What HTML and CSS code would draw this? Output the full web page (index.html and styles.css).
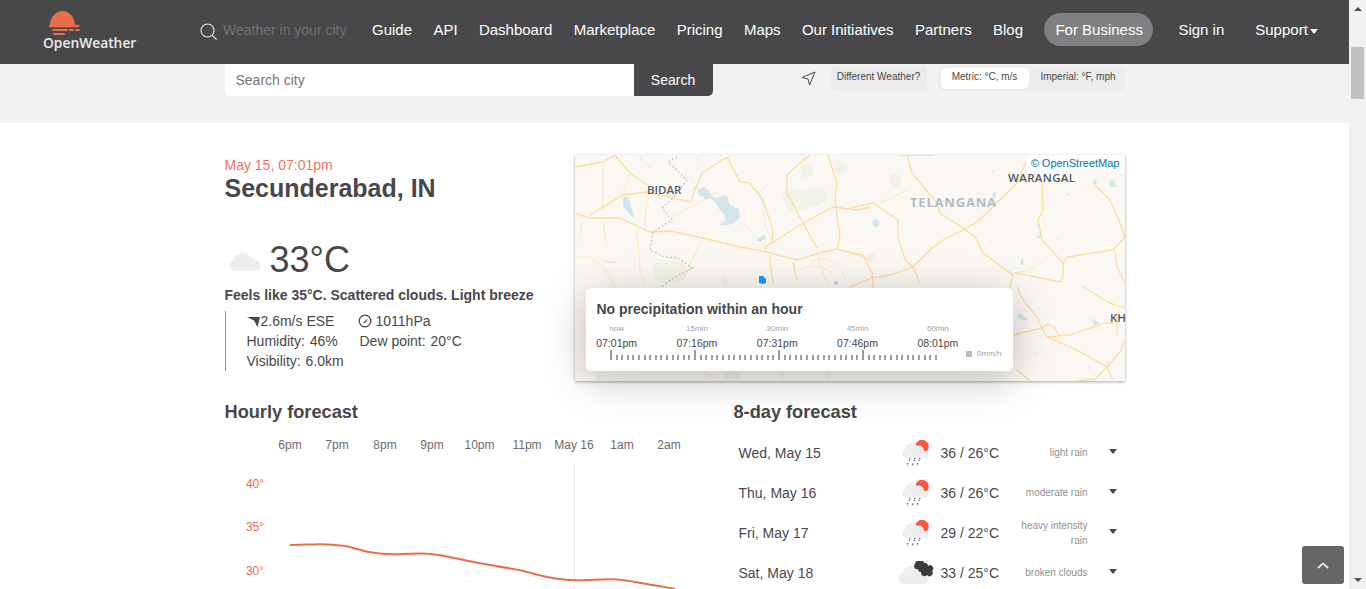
FILE: index.html
```html
<!DOCTYPE html>
<html lang="en">
<head>
<meta charset="utf-8">
<title>Secunderabad, IN - OpenWeather</title>
<link rel="stylesheet" href="styles.css">
</head>
<body>
<svg class="defs" width="0" height="0" aria-hidden="true">
  <symbol id="rain-icon" viewBox="0 0 30 28">
    <circle cx="21" cy="7.500" r="6.800" fill="#f6593f"/>
    <path d="M5 18.500a4 4 0 0 1-1-7.800A6.500 6.500 0 0 1 16 7a5 5 0 0 1 7 5 3.300 3.300 0 0 1 1.500 6.500z" fill="#eeeeee"/>
    <path d="M9 19l-1 3M14 19l-1 3M19 19l-1 3M7 24l-.7 2.500M12 24.500l-.7 2.500M17 24l-.7 2.500" stroke="#555" stroke-width="1.200" stroke-dasharray="1.500 .7" fill="none"/>
  </symbol>
</svg>
<div class="window">
  <div class="page">
    <header class="topbar">
      <div class="logo">
        <svg class="logo-mark" viewBox="48 11 34 24" width="34" height="24" aria-hidden="true">
          <path d="M50 25.500a12.500 14.500 0 0 1 25 0z" fill="#eb6e4b"/>
          <path d="M50 26h28" stroke="#eb6e4b" stroke-width="2.400" stroke-linecap="round" fill="none"/>
          <path d="M53 30h14M70 30h3M76 30h3" stroke="#eb6e4b" stroke-width="2" stroke-linecap="round" fill="none"/>
          <path d="M54 34h10" stroke="#eb6e4b" stroke-width="2" stroke-linecap="round" fill="none"/>
        </svg>
        <span class="logo-text">OpenWeather</span>
      </div>
      <div class="top-search">
        <svg viewBox="0 0 17 17" width="17" height="17" aria-hidden="true">
          <circle cx="7.500" cy="7.500" r="6.500" fill="none" stroke="#e8e8e8" stroke-width="1.100"/>
          <path d="M12.300 12.300l4.200 4.200" stroke="#e8e8e8" stroke-width="1.100"/>
        </svg>
        <span class="top-placeholder">Weather in your city</span>
      </div>
      <nav class="nav">
        <a>Guide</a><a>API</a><a>Dashboard</a><a>Marketplace</a><a>Pricing</a><a>Maps</a><a>Our Initiatives</a><a>Partners</a><a>Blog</a>
        <a class="pill">For Business</a>
        <a class="signin">Sign in</a>
        <a class="support">Support<i class="caret-white"></i></a>
      </nav>
    </header>

    <section class="band">
      <div class="container band-row">
        <div class="search">
          <span class="search-input">Search city</span>
          <span class="search-btn">Search</span>
        </div>
        <div class="controls">
          <svg class="locate" viewBox="0 0 15 15" width="15" height="15" aria-hidden="true">
            <path d="M14 1L1 6.500l6 1.500 1.500 6z" fill="none" stroke="#48484a" stroke-width="1"/>
          </svg>
          <span class="chip">Different Weather?</span>
          <div class="units">
            <span class="unit active">Metric: °C, m/s</span>
            <span class="unit">Imperial: °F, mph</span>
          </div>
        </div>
      </div>
    </section>

    <main class="container content">
      <div class="current">
        <div class="summary">
          <div class="date">May 15, 07:01pm</div>
          <h1 class="city">Secunderabad, IN</h1>
          <div class="temp-row">
            <svg viewBox="0 0 32 19" width="32" height="19" aria-hidden="true">
              <path d="M6 19a6 6 0 0 1-1-11.800A8.500 8.500 0 0 1 20.500 5 5.500 5.500 0 0 1 26 8.500 5.300 5.300 0 0 1 27 19z" fill="#eeeeee"/>
            </svg>
            <span class="temp">33°C</span>
          </div>
          <div class="feels">Feels like 35°C. Scattered clouds. Light breeze</div>
          <ul class="details">
            <li>
              <span class="wind">
                <svg viewBox="0 0 13 10" width="13" height="10" aria-hidden="true"><path d="M0 0h13l-2.500 10-3.500-6.500z" fill="#48484a"/></svg>
                2.6m/s ESE
              </span>
              <span class="pressure">
                <svg viewBox="0 0 14 14" width="14" height="14" aria-hidden="true"><circle cx="7" cy="7" r="5.800" fill="none" stroke="#48484a" stroke-width="1.300"/><path d="M4.500 9.500L9.800 4.200 8 8.200z" fill="#48484a"/></svg>
                1011hPa
              </span>
            </li>
            <li><span class="humidity">Humidity: <b class="val">46%</b></span><span>Dew point: <b class="val">20°C</b></span></li>
            <li><span>Visibility: <b class="val">6.0km</b></span></li>
          </ul>
        </div>

        <div class="map-box">
          <svg class="map" viewBox="575 155 550 226" width="550" height="226" aria-label="Map">
            <rect x="575" y="155" width="550" height="226" fill="#fbf8f3"/>
            <g fill="#f2f3e8">
              <path d="M782 193c6-8 14-4 22-2 8-6 20-4 24 2 0 8-8 14-18 14-8 4-18 8-24 0z"/>
              <path d="M800 166c4-4 12-2 14 4 0 6-8 10-12 6z"/>
              <path d="M835 160c4-2 10 0 12 8-2 8-8 10-12 4z"/>
              <path d="M890 176c4-4 10-2 12 6 0 8-8 8-12 2z"/>
              <path d="M653 265c8-6 20-4 30-2 6 8 4 16-6 20-10 0-20 0-24-6z"/>
              <path d="M722 276c4-2 6 2 6 8l-6 2z"/>
              <path d="M726 370c8-4 14 0 14 11h-16z"/>
              <path d="M596 372c6-2 10 2 8 9h-8z"/>
              <path d="M866 255l8-4 2 8-6 4z"/>
            </g>
            <g fill="#d3e6ec">
              <path d="M697 190l6-3 5 3 4 6 4 2 9-3 3 2 1 6 3 3 7 3 1 8-6 6-9 3-6-1 7-5-2-6-5-5-4-8-6-3-3 2-4-4-2 1z"/>
              <path d="M623 197l5 0 2 6 3 9 1 6-5-4-6-8z"/>
              <path d="M757 238l4-1 2-2 2 2 2 2-4 1-2 2-4-1z"/>
              <path d="M603 260l5 1 4 1 6-1-4 2-6 0z"/>
              <path d="M874 220c2-2 4 0 5 3 1 4-2 5-4 4-3-1-3-5-1-7z"/>
              <path d="M1112 179l3 3 2 5-6 0-2-3z"/>
              <path d="M1095 178l2 3-1 4-3-2z"/>
              <path d="M1066 194l4-1-2 3z"/>
              <path d="M1036 235l6 1 0 2-4 0z"/><path d="M1057 238l2 1-1 2z"/>
              <path d="M1022 257l2 4-1 4-3-1z"/>
              <path d="M1018 313l4 1 2 3 4 2-4 2-4-2-2-3z"/>
              <path d="M1092 318l4 3 4 2-4 2-2 1z"/>
              <path d="M992 194l3-3 1 5-2 3z"/>
              <path d="M970 197l5 3-3 0z"/><path d="M992 170l2 0 0 3z"/>
              <path d="M1034 352l2 3-1 2z"/><path d="M1107 361l2 2-1 3z"/><path d="M1088 367l2 2-1 1z"/>
            </g>
            <g fill="none" stroke="#d9e8eb" stroke-width=".8">
              <path d="M640 155c2 8 6 10 12 12M700 163c-4-6-2-8 6-8M738 222c8 2 10 8 18 14"/>
              <path d="M767 185l-8 8 3 8 2 16 2 10 4 10 5 7"/>
              <path d="M690 178c4 2 6 8 4 12"/>
            </g>
            <g fill="none" stroke="#fde6b8" stroke-width=".9">
              <path d="M603 162v50M603 222l4 24M582 222l-2 18-5 5"/>
              <path d="M575 257h15l13 10 12 20"/>
              <path d="M637 228l3 42 5 16"/>
              <path d="M673 217l44-25"/>
              <path d="M647 192l-2 40"/>
              <path d="M630 173l-8 22"/>
              <path d="M702 238l-20 45"/>
              <path d="M772 243l-18 2"/>
              <path d="M880 203l28-13"/>
              <path d="M1015 273l15-3 17-13"/>
              <path d="M812 262c6-4 14-4 20 0s12 10 14 20M800 270c10-6 26-4 36 6M818 255c2 10 6 20 10 30"/>
              <path d="M703 370l14 11M782 370v11M830 370c-4 4-4 8-2 11"/>
            </g>
            <g fill="none" stroke="#fcdc9e" stroke-width="1.300">
              <path d="M575 213l15 5h30l30 14 20-1 33 7 37 9 27 5 30 8 26-8 14-3 16 4 17 7"/>
              <path d="M590 215l33-20 24-3 43 10 12-29 25-16"/>
              <path d="M575 167l28-5 12-7 15 18 17 12"/>
              <path d="M727 157l13 25 10 1 13 17 10 30-1 13-7 4 2 5"/>
              <path d="M810 155l-10 8-13 12v18l16 30 14 25"/>
              <path d="M828 155l9 28-2 17 5 37-3 13"/>
              <path d="M772 243l28-18 33-18 24 3 13-3"/>
              <path d="M770 255v8l3 20"/>
              <path d="M793 262l4 18"/>
              <path d="M900 155h33M907 155l5 18 25 30 3 10 23 15 12 9 8 16 30 22-3 13"/>
              <path d="M1027 160l-10 23-20 20-20 19-14 8-20 10-11 8-19 19-23 8-18 3-22 9"/>
              <path d="M913 267l7 16"/>
              <path d="M1042 183l1 27-5 10 4 20 21 23 4-6 46-7 12-13"/>
              <path d="M1095 185l15 15 10 23 5 14"/>
              <path d="M1063 263v14l-3 5-45-9"/>
              <path d="M1115 252l2 15 8 16"/>
              <path d="M850 208l23-5 25 17v17l7 23 8 7"/>
              <path d="M850 253l13 2 9 18 1 14"/>
              <path d="M1017 287l6 13 14 17 5 11-29 7"/>
              <path d="M1042 328l5 9 23-2 23-8 12-4 10 0"/>
              <path d="M1047 337l30 13 30 17 6 13M1107 367l13-15 5-12"/>
              <path d="M1083 287l27 16 15 5M1117 315l0 20"/>
              <path d="M1017 370l13 11M1077 381l16-2M1093 381l14-14"/>
              <path d="M1042 328l6-4 6 3 5 8"/>
            </g>
            <path d="M677 157l-9 5 12 11 7 7-4 5-10 13-11 10 10 12-19 12-3 18 15 7 12 1 16 10-20 10-11 9" fill="none" stroke="#dcbcc0" stroke-width="1.300" stroke-dasharray="2 2"/>
            <circle cx="836" cy="283" r="2" fill="#c4d6dc"/>
            <path d="M759 276l4 0 3 3 0 4-3 1-4-1z" fill="#1e96f0"/>
            <text class="map-label" x="647" y="194">BIDAR</text>
            <text class="map-label wide" x="1008" y="182">WARANGAL</text>
            <text class="map-label state" x="910" y="207">TELANGANA</text>
            <text class="map-label" x="1110" y="322">KH</text>
          </svg>
          <span class="attribution">© OpenStreetMap</span>
          <div class="precip">
            <h2 class="precip-title">No precipitation within an hour</h2>
            <div class="precip-scale">
              <div class="scale-cell"><small>now</small><span>07:01pm</span></div>
              <div class="scale-cell"><small>15min</small><span>07:16pm</span></div>
              <div class="scale-cell"><small>30min</small><span>07:31pm</span></div>
              <div class="scale-cell"><small>45min</small><span>07:46pm</span></div>
              <div class="scale-cell"><small>60min</small><span>08:01pm</span></div>
            </div>
            <div class="ticks-row">
              <div class="ticks"></div>
              <div class="legend"><i></i>0mm/h</div>
            </div>
          </div>
        </div>
      </div>

      <div class="forecasts">
        <section class="hourly">
          <h2 class="section-title">Hourly forecast</h2>
          <svg class="chart" viewBox="225 435 475 154" width="475" height="154" aria-label="Hourly temperature chart">
            <g class="chart-hours">
              <text x="290" y="449">6pm</text><text x="337" y="449">7pm</text><text x="385" y="449">8pm</text>
              <text x="432" y="449">9pm</text><text x="479.500" y="449">10pm</text><text x="527" y="449">11pm</text>
              <text x="574" y="449">May 16</text><text x="622" y="449">1am</text><text x="669" y="449">2am</text>
            </g>
            <g class="chart-temps">
              <text x="255" y="488">40°</text><text x="255" y="531">35°</text><text x="255" y="575">30°</text>
            </g>
            <path d="M574.500 463V589" stroke="#eeeeee" fill="none"/>
            <path d="M290 545C300 545 312 544.300 320 544.300C330 544.300 338 545 345 546C355 548 362 551 370 552.300C380 554 388 554.400 395 554.300C404 554.200 412 553.400 420 553.400C428 553.400 434 554 442 555.500C455 558 468 561 480 563.300C493 565.800 507 567.500 520 570.300C532 573 545 577 557 578.800C566 580 574 580.500 582 580.300C592 580 602 579 613 579.300C622 579.500 630 581 638 582.500C650 584.800 662 586.500 675 589" fill="none" stroke="#eb6e4b" stroke-width="2"/>
          </svg>
        </section>
        <section class="daily">
          <h2 class="section-title">8-day forecast</h2>
          <ul class="days">
            <li class="day"><span class="day-name">Wed, May 15</span><svg class="day-icon" width="30" height="28" aria-hidden="true"><use href="#rain-icon"/></svg><span class="day-temp">36 / 26°C</span><span class="day-desc">light rain</span><i class="caret"></i></li>
            <li class="day"><span class="day-name">Thu, May 16</span><svg class="day-icon" width="30" height="28" aria-hidden="true"><use href="#rain-icon"/></svg><span class="day-temp">36 / 26°C</span><span class="day-desc">moderate rain</span><i class="caret"></i></li>
            <li class="day"><span class="day-name">Fri, May 17</span><svg class="day-icon" width="30" height="28" aria-hidden="true"><use href="#rain-icon"/></svg><span class="day-temp">29 / 22°C</span><span class="day-desc">heavy intensity rain</span><i class="caret"></i></li>
            <li class="day"><span class="day-name">Sat, May 18</span>
              <svg class="day-icon wide" width="36" height="24" viewBox="0 0 36 24" aria-hidden="true">
                <path d="M6 23a6 6 0 0 1-1-11.800A9 9 0 0 1 21 8.500a6 6 0 0 1 6 6A4.500 4.500 0 0 1 27 23z" fill="#eeeeee"/>
                <path d="M17 3a3 3 0 0 1 4-3 3 3 0 0 1 5 2 3 3 0 0 1 4 3 3 3 0 0 1 4 5 3 3 0 0 1-5 4 3.500 3.500 0 0 1-6-3 3 3 0 0 1-3-3 3 3 0 0 1-3-5z" fill="#3c3c3e"/>
              </svg>
              <span class="day-temp">33 / 25°C</span><span class="day-desc">broken clouds</span><i class="caret"></i></li>
          </ul>
        </section>
      </div>
    </main>
  </div>
  <div class="scrollbar" aria-hidden="true">
    <i class="arrow-up"></i>
    <span class="thumb"></span>
    <i class="arrow-down"></i>
  </div>
  <button class="to-top" aria-label="Back to top">
    <svg viewBox="0 0 14 8" width="12" height="7" aria-hidden="true"><path d="M1 7l6-5.500L13 7" fill="none" stroke="#f2f2f2" stroke-width="2"/></svg>
  </button>
</div>
</body>
</html>
```
FILE: styles.css
```css
* { box-sizing: border-box; }
html, body { margin: 0; height: 100%; overflow: hidden; }
body { font-family: "Liberation Sans", Arial, sans-serif; color: #48484a; background: #fff; }
.defs { position: absolute; }
h1, h2, ul { margin: 0; padding: 0; list-style: none; }
.window { display: flex; height: 589px; position: relative; overflow: hidden; }
.page { width: 1349px; flex: none; overflow: hidden; }
.container { width: 900px; margin: 0 auto; }

.topbar { height: 64px; background: #48484a; display: flex; align-items: center; padding: 0 0 5px 43px; }
.logo { width: 157px; display: flex; flex-direction: column; align-items: flex-start; flex: none; margin-top: 3px; }
.logo-mark { margin-left: 5px; }
.logo-text { font-family: "Open Sans", sans-serif; font-weight: 600; font-size: 13.800px; line-height: 16px; color: #ececec; margin-top: 0; white-space: nowrap; }
.top-search { display: flex; align-items: center; gap: 6px; width: 172px; flex: none; }
.top-search svg { flex: none; margin-top: 4px; }
.top-placeholder { font-size: 14px; color: #707072; white-space: nowrap; }
.nav { display: flex; align-items: center; font-size: 15px; color: #fff; white-space: nowrap; }
.nav a { margin-right: 21.350px; }
.nav .pill { background: #808082; border-radius: 17px; height: 33px; line-height: 33px; padding: 0 11px; margin-right: 25px; width: 109px; }
.nav .signin { margin-right: 31px; }
.nav .support { margin-right: 0; display: flex; align-items: center; }
.caret-white { width: 0; height: 0; border: 4px solid transparent; border-top: 5px solid #f2f2f2; border-bottom: 0; margin-left: 2px; margin-top: 3px; }

.band { height: 59px; background: #f2f2f2; }
.band-row { display: flex; align-items: flex-start; justify-content: space-between; }
.search { display: flex; width: 488px; height: 32px; font-size: 14px; line-height: 32px; }
.search-input { width: 409px; background: #fff; color: #767678; padding-left: 11px; border-radius: 0 0 0 5px; }
.search-btn { width: 79px; background: #48484a; color: #fff; text-align: center; border-radius: 0 0 5px 0; }
.controls { display: flex; align-items: flex-start; padding-top: 1px; font-size: 10px; color: #48484a; }
.locate { margin: 6px 15px 0 0; }
.chip { width: 96px; height: 26px; line-height: 23px; background: #ececec; border-radius: 5px; text-align: center; margin-right: 11px; }
.units { display: flex; width: 187px; height: 26px; background: #ececec; border-radius: 6px; padding: 3px; align-items: flex-start; }
.unit { height: 21px; line-height: 18px; text-align: center; flex: 1; padding-left: 6px; white-space: nowrap; }
.unit.active { background: #fff; border-radius: 5px; width: 88px; flex: none; padding: 0; }

.content { padding-top: 32px; }
.current { display: flex; justify-content: space-between; height: 226px; }
.summary { width: 340px; }
.date { font-size: 14px; line-height: 16px; margin-top: 2px; color: #ef7465; }
.city { font-size: 25px; line-height: 31px; font-weight: 700; color: #48484a; white-space: nowrap; }
.temp-row { display: flex; align-items: center; margin-top: 35px; height: 42px; padding-left: 4px; gap: 9px; }
.temp-row svg { margin-top: 2px; }
.temp { font-size: 36px; line-height: 42px; color: #48484a; }
.feels { font-size: 14px; font-weight: 700; line-height: 18px; margin-top: 5px; white-space: nowrap; }
.details { margin-top: 7px; border-left: 1px solid #eb6e4b; padding-left: 21px; font-size: 14px; line-height: 20px; height: 60px; }
.details li { display: flex; white-space: nowrap; }
.val { font-weight: 400; margin-left: 1px; }
.wind { width: 111px; display: flex; align-items: center; gap: 1px; }
.wind svg { margin-top: 1px; }
.pressure { display: flex; align-items: center; gap: 4px; }
.humidity { width: 113px; }

.map-box { width: 550px; height: 226px; position: relative; box-shadow: 0 1px 3px rgba(0,0,0,.35); }
.map { display: block; }
.map-label { font-family: "Open Sans", sans-serif; font-size: 11.500px; font-weight: 600; fill: #4f5a66; }
.map-label.wide { letter-spacing: .35px; }
.map-label.state { font-size: 13px; fill: #b3bcc4; letter-spacing: .8px; font-weight: 700; }
.attribution { position: absolute; top: 0; right: 0; background: rgba(255,255,255,.75); color: #0078a8; font-size: 11px; line-height: 16px; padding: 0 5px; }
.precip { position: absolute; left: 11px; top: 133px; width: 427px; height: 83px; background: #fff; border-radius: 6px; padding: 12px 11px 0; box-shadow: 0 8px 40px rgba(0,0,0,.25); }
.precip-title { font-size: 14px; font-weight: 700; line-height: 18px; color: #48484a; }
.precip-scale { display: flex; margin: 6px 0 0 -20px; }
.scale-cell { width: 80.300px; flex: none; display: flex; flex-direction: column; align-items: center; }
.scale-cell small { font-size: 8px; line-height: 10px; color: #a0a0a0; }
.scale-cell span { font-size: 10.500px; line-height: 14px; margin-top: 2px; white-space: nowrap; color: #48484a; }
.ticks-row { display: flex; align-items: flex-end; margin-left: 13px; }
.ticks { width: 332px; height: 10px; background-image:
  repeating-linear-gradient(90deg, #9a9a9a 0, #9a9a9a 2px, transparent 2px, transparent 84px),
  repeating-linear-gradient(90deg, #a0a0a0 0, #a0a0a0 2px, transparent 2px, transparent 5.600px);
  background-size: 100% 100%, 100% 5px; background-position: 0 0, 0 100%; background-repeat: no-repeat; }
.legend { margin-left: 27px; display: flex; align-items: center; gap: 5px; font-size: 8px; color: #a0a0a0; line-height: 8px; margin-bottom: 2px; }
.legend i { width: 6px; height: 6px; background: #bdbdbd; display: block; }

.forecasts { display: flex; justify-content: space-between; margin-top: 20px; }
.section-title { font-size: 18.200px; font-weight: 700; line-height: 22px; color: #48484a; }
.hourly { width: 475px; flex: none; }
.chart { display: block; margin-top: 12px; }
.chart-hours text { font-size: 12px; fill: #6b6b6d; text-anchor: middle; }
.chart-temps text { font-size: 12px; fill: #f26b4a; text-anchor: middle; }
.daily { width: 391px; flex: none; }
.days { margin-top: 10px; }
.day { height: 40px; display: flex; align-items: center; font-size: 14px; padding-left: 5px; }
.day-name { width: 162px; flex: none; white-space: nowrap; }
.day-icon { flex: none; width: 30px; margin-right: 10px; }
.day-icon.wide { width: 36px; margin-left: -3px; margin-right: 7px; }
.day-temp { width: 77px; flex: none; white-space: nowrap; }
.day-desc { width: 70px; flex: none; text-align: right; font-size: 10px; line-height: 15px; color: #909092; margin-bottom: 1px; }
.caret { width: 0; height: 0; border: 4px solid transparent; border-top: 5px solid #48484a; border-bottom: 0; margin-left: 21px; margin-top: -3px; }

.scrollbar { width: 17px; flex: none; background: #f1f1f1; display: flex; flex-direction: column; align-items: center; position: relative; }
.arrow-up { width: 0; height: 0; border: 4px solid transparent; border-bottom: 4px solid #505050; border-top: 0; margin-top: 7px; }
.thumb { width: 13px; height: 52px; background: #c1c1c1; margin-top: 36px; }
.arrow-down { width: 0; height: 0; border: 4px solid transparent; border-top: 4px solid #505050; border-bottom: 0; margin-top: auto; margin-bottom: 7px; }
.to-top { position: absolute; left: 1302px; top: 546px; width: 42px; height: 38px; background: #666; border: 0; border-radius: 3px; padding: 0; display: flex; align-items: center; justify-content: center; }
```
